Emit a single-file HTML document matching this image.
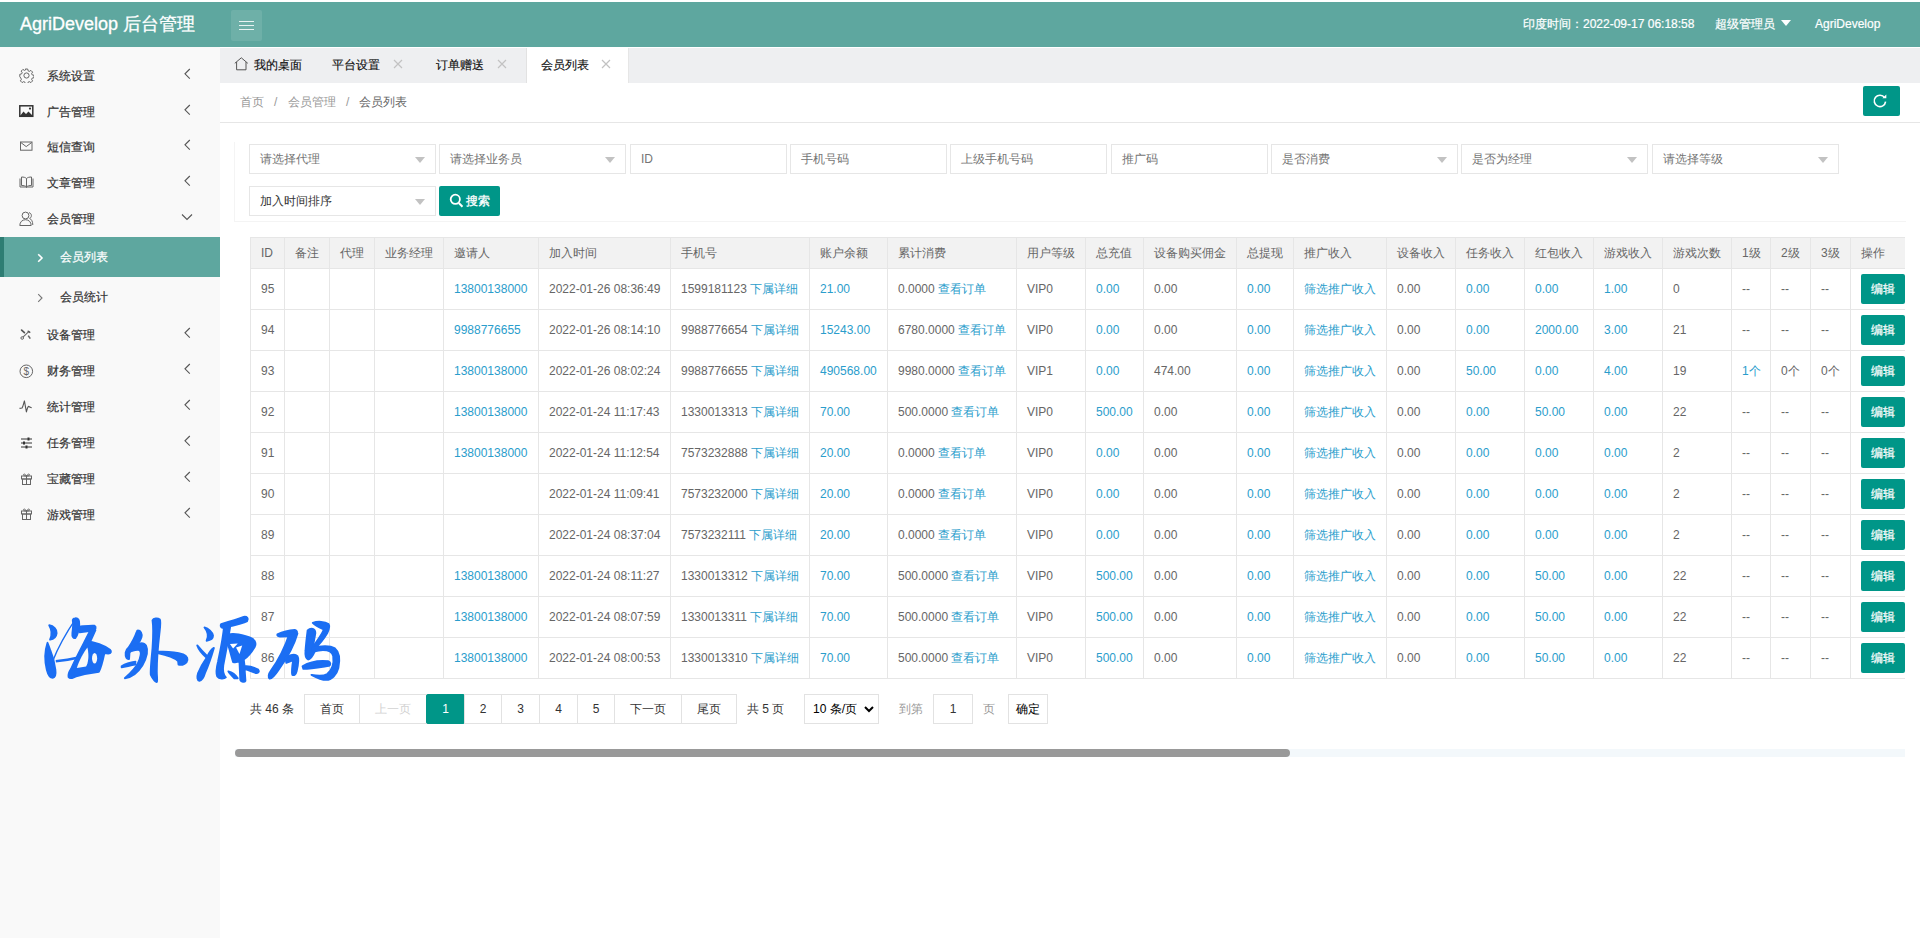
<!DOCTYPE html>
<html><head><meta charset="utf-8">
<style>
*{margin:0;padding:0;box-sizing:border-box}
html,body{width:1920px;height:938px;overflow:hidden}
body{position:relative;background:#fff;font-family:"Liberation Sans",sans-serif;font-size:12px;color:#333}
.a{position:absolute}
#hdr{left:0;top:2px;width:1920px;height:45px;background:#5ea79f;color:#fff}
#logo{left:20px;top:10px;font-size:18px;line-height:24px;white-space:nowrap;-webkit-text-stroke:0.3px #fff}
#burger{left:231px;top:8px;width:31px;height:31px;background:rgba(255,255,255,.1);border-radius:2px}
#burger i{position:absolute;left:8px;width:15px;height:1.2px;background:#e8f3f2}
.hr{top:14px;line-height:16px;font-size:12px;white-space:nowrap;-webkit-text-stroke:0.2px #fff}
#side{left:0;top:47px;width:220px;height:891px;background:#f9f9f9}
.mi{position:absolute;left:0;width:220px;height:36px;line-height:36px;color:#333}
.mi .t{position:absolute;left:47px;top:0;-webkit-text-stroke:0.2px currentColor}
.mi svg.ic{position:absolute;left:19px;top:11px}
.mi svg.ch{position:absolute;left:183px;top:12px}
.sub{height:40px;line-height:40px}
.sub .t{left:60px}
.sub svg.ch{left:36px;top:14px}
.act{background:#5ea79f;color:#fff}
.act:before{content:"";position:absolute;left:0;top:0;width:4px;height:40px;background:#2e7d73}
#tabs{left:220px;top:48px;width:1700px;height:35px;background:#eeeff1}
.tab{position:absolute;top:0;height:35px;line-height:34px;white-space:nowrap;color:#111;-webkit-text-stroke:0.15px currentColor}
.tab svg{position:absolute}
#crumb{left:220px;top:83px;width:1700px;height:40px;background:#fff;border-bottom:1px solid #e6e6e6}
.cr{position:absolute;top:10.5px;line-height:16px;color:#999}
#refresh{left:1863px;top:86px;width:37px;height:30px;background:#009688;border-radius:2px}
.inp{position:absolute;height:30px;border:1px solid #e6e6e6;background:#fff;line-height:28px;padding-left:10px;color:#757575;white-space:nowrap}
.sel:after{content:"";position:absolute;right:10px;top:12px;border-left:5px solid transparent;border-right:5px solid transparent;border-top:6px solid #c2c2c2}
#sbtn{left:439px;top:186px;width:61px;height:30px;background:#009688;border-radius:2px;color:#fff;line-height:30px;-webkit-text-stroke:0.3px #fff}
#tblwrap{left:235px;top:221px;width:1670px;height:545px;overflow:hidden}
table{position:absolute;left:15px;top:16px;border-collapse:collapse;table-layout:fixed}
td,th{border:1px solid #e6e6e6;padding:0 0 0 10px;font-weight:normal;text-align:left;white-space:nowrap;overflow:hidden;color:#666;font-size:12px}
th{height:31px;background:#f2f2f2}
td{height:41px}
.l{color:#2a9dcc}
.eb{display:inline-block;width:44px;height:30px;line-height:30px;background:#009688;color:#fff;text-align:center;border-radius:2px;-webkit-text-stroke:0.2px #fff}
#sbar{left:235px;top:749px;width:1670px;height:8px;background:#f3f8fb}
#thumb{left:235px;top:749px;width:1055px;height:8px;background:#999;border-radius:4px}
.pg{position:absolute;top:694px;height:30px;line-height:28px;border:1px solid #e2e2e2;text-align:center;color:#333;background:#fff}
.pt{position:absolute;top:701px;line-height:16px;color:#333;white-space:nowrap}
</style></head><body>
<div id="hdr" class="a">
  <div id="logo" class="a">AgriDevelop 后台管理</div>
  <div id="burger" class="a"><i style="top:11px"></i><i style="top:15px"></i><i style="top:19px"></i></div>
  <div class="a hr" style="left:1523px">印度时间：2022-09-17 06:18:58</div>
  <div class="a hr" style="left:1715px">超级管理员</div>
  <div class="a" style="left:1781px;top:18px;border-left:5px solid transparent;border-right:5px solid transparent;border-top:6px solid #fff"></div>
  <div class="a hr" style="left:1815px">AgriDevelop</div>
</div>

<div id="side" class="a">
<div class="mi" style="top:11px"><svg class="ic" width="15" height="15" viewBox="0 0 15 15" style="left:19px;top:10px"><path d="M6.3 1h2.4l.4 1.8 1.2.6 1.6-1 1.7 1.7-1 1.6.6 1.2 1.8.4v2.4l-1.8.4-.6 1.2 1 1.6-1.7 1.7-1.6-1-1.2.6-.4 1.8H6.3l-.4-1.8-1.2-.6-1.6 1-1.7-1.7 1-1.6-.6-1.2L.8 8.7V6.3l1.8-.4.6-1.2-1-1.6 1.7-1.7 1.6 1 1.2-.6z" fill="none" stroke="#666" stroke-width="1"/><circle cx="7.5" cy="7.5" r="2.6" fill="none" stroke="#666" stroke-width="1"/></svg><span class="t">系统设置</span><svg class="ch" width="9" height="12" viewBox="0 0 9 12" style="left:183px;top:10px"><path d="M6.8 1 L2 5.8 L6.8 10.6" fill="none" stroke="#555" stroke-width="1.1"/></svg></div>
<div class="mi" style="top:47px"><svg class="ic" width="15" height="13" viewBox="0 0 15 13" style="left:19px;top:11px"><rect x="0.8" y="0.8" width="13" height="10.5" fill="none" stroke="#333" stroke-width="1.5"/><path d="M1 11 L4.5 6.5 L7 9 L9.5 6.5 L14 11 Z" fill="#333"/><circle cx="11" cy="3.6" r="1.1" fill="#333"/></svg><span class="t">广告管理</span><svg class="ch" width="9" height="12" viewBox="0 0 9 12" style="left:183px;top:10px"><path d="M6.8 1 L2 5.8 L6.8 10.6" fill="none" stroke="#555" stroke-width="1.1"/></svg></div>
<div class="mi" style="top:82px"><svg class="ic" width="14" height="11" viewBox="0 0 14 11" style="left:19px;top:12px"><rect x="1.5" y="1" width="11.5" height="8.2" fill="none" stroke="#666" stroke-width="1"/><path d="M1.8 1.5 L7.2 5.6 L12.7 1.5" fill="none" stroke="#666" stroke-width="1"/></svg><span class="t">短信查询</span><svg class="ch" width="9" height="12" viewBox="0 0 9 12" style="left:183px;top:10px"><path d="M6.8 1 L2 5.8 L6.8 10.6" fill="none" stroke="#555" stroke-width="1.1"/></svg></div>
<div class="mi" style="top:118px"><svg class="ic" width="15" height="12" viewBox="0 0 15 12" style="left:19px;top:11px"><path d="M1 2.5v8.5h5.5c.6 0 1 .4 1 .8 0-.4.4-.8 1-.8H14V2.5" fill="none" stroke="#666" stroke-width="1"/><path d="M2.5 1v8.5c2 0 4 .3 5 1.5 1-1.2 3-1.5 5-1.5V1c-2 0-4 .4-5 1.5C6.5 1.4 4.5 1 2.5 1zM7.5 2.5V11" fill="none" stroke="#666" stroke-width="1"/></svg><span class="t">文章管理</span><svg class="ch" width="9" height="12" viewBox="0 0 9 12" style="left:183px;top:10px"><path d="M6.8 1 L2 5.8 L6.8 10.6" fill="none" stroke="#555" stroke-width="1.1"/></svg></div>
<div class="mi" style="top:154px"><svg class="ic" width="15" height="16" viewBox="0 0 15 16" style="left:19px;top:10px"><circle cx="6.5" cy="4.5" r="3.4" fill="none" stroke="#666" stroke-width="1"/><path d="M0.8 14.5c0-3.5 2.5-5.8 5.7-5.8s5.7 2.3 5.7 5.8z" fill="none" stroke="#666" stroke-width="1"/><path d="M10 1.6c1.6.5 2.4 1.7 2.4 3s-.7 2.2-1.8 2.8c1.7.8 3.2 2.8 3.2 6.6" fill="none" stroke="#666" stroke-width="1"/></svg><span class="t">会员管理</span><svg class="ch" width="12" height="8" viewBox="0 0 12 8" style="left:181px;top:12px"><path d="M1 1.5 L6 6.5 L11 1.5" fill="none" stroke="#555" stroke-width="1.1"/></svg></div>
<div class="mi" style="top:270px"><svg class="ic" width="24" height="24" viewBox="0 0 24 24" style="left:14px;top:5px"><path d="M7.6 8.1 L10.4 10.7" stroke="#555" stroke-width="1.7" stroke-linecap="round"/><path d="M9 15.2 L14.2 10.2" stroke="#666" stroke-width="1.1"/><circle cx="8.2" cy="16" r="1.3" fill="none" stroke="#666" stroke-width="1"/><path d="M13.2 9 Q14.5 7.8 16.8 10.2 L15 11.2 Z" fill="#555"/><path d="M14.2 13.6 L16.3 16.6" stroke="#666" stroke-width="1.6"/></svg><span class="t">设备管理</span><svg class="ch" width="9" height="12" viewBox="0 0 9 12" style="left:183px;top:10px"><path d="M6.8 1 L2 5.8 L6.8 10.6" fill="none" stroke="#555" stroke-width="1.1"/></svg></div>
<div class="mi" style="top:306px"><svg class="ic" width="15" height="15" viewBox="0 0 15 15" style="left:19px;top:11px"><circle cx="7.3" cy="7.3" r="6.3" fill="none" stroke="#666" stroke-width="1"/><text x="7.3" y="11" text-anchor="middle" font-size="10" fill="#666" font-family="Liberation Sans">$</text></svg><span class="t">财务管理</span><svg class="ch" width="9" height="12" viewBox="0 0 9 12" style="left:183px;top:10px"><path d="M6.8 1 L2 5.8 L6.8 10.6" fill="none" stroke="#555" stroke-width="1.1"/></svg></div>
<div class="mi" style="top:342px"><svg class="ic" width="24" height="24" viewBox="0 0 24 24" style="left:14px;top:5px"><path d="M5.5 14.4 L8 14 C9 13 9.6 9 10.4 6.9 L12.4 17.9 C13 15.5 13.6 12.8 14.4 12.4 C15.3 12.6 16.5 13.6 17.7 13.8" fill="none" stroke="#555" stroke-width="1.1" stroke-linejoin="round"/></svg><span class="t">统计管理</span><svg class="ch" width="9" height="12" viewBox="0 0 9 12" style="left:183px;top:10px"><path d="M6.8 1 L2 5.8 L6.8 10.6" fill="none" stroke="#555" stroke-width="1.1"/></svg></div>
<div class="mi" style="top:378px"><svg class="ic" width="13" height="12" viewBox="0 0 13 12" style="left:20px;top:12px"><path d="M1 2h11M1 6h11M1 10h11" stroke="#333" stroke-width="1"/><rect x="7.5" y="0.5" width="2" height="3" fill="#333"/><rect x="3" y="4.5" width="2" height="3" fill="#333"/><rect x="5.5" y="8.5" width="2" height="3" fill="#333"/></svg><span class="t">任务管理</span><svg class="ch" width="9" height="12" viewBox="0 0 9 12" style="left:183px;top:10px"><path d="M6.8 1 L2 5.8 L6.8 10.6" fill="none" stroke="#555" stroke-width="1.1"/></svg></div>
<div class="mi" style="top:414px"><svg class="ic" width="13" height="12" viewBox="0 0 13 12" style="left:20px;top:12px"><rect x="1.5" y="3" width="10" height="3" fill="none" stroke="#666"/><rect x="2.5" y="6" width="8" height="5.5" fill="none" stroke="#666"/><path d="M6.5 3v8.5M6.5 3C5 .5 3.5.8 3.5 1.8S5 3 6.5 3C8 .5 9.5.8 9.5 1.8S8 3 6.5 3" fill="none" stroke="#666"/></svg><span class="t">宝藏管理</span><svg class="ch" width="9" height="12" viewBox="0 0 9 12" style="left:183px;top:10px"><path d="M6.8 1 L2 5.8 L6.8 10.6" fill="none" stroke="#555" stroke-width="1.1"/></svg></div>
<div class="mi" style="top:450px"><svg class="ic" width="13" height="12" viewBox="0 0 13 12" style="left:20px;top:11px"><rect x="1.5" y="3" width="10" height="3" fill="none" stroke="#666"/><rect x="2.5" y="6" width="8" height="5.5" fill="none" stroke="#666"/><path d="M6.5 3v8.5M6.5 3C5 .5 3.5.8 3.5 1.8S5 3 6.5 3C8 .5 9.5.8 9.5 1.8S8 3 6.5 3" fill="none" stroke="#666"/></svg><span class="t">游戏管理</span><svg class="ch" width="9" height="12" viewBox="0 0 9 12" style="left:183px;top:10px"><path d="M6.8 1 L2 5.8 L6.8 10.6" fill="none" stroke="#555" stroke-width="1.1"/></svg></div>
<div class="mi sub act" style="top:190px"><svg class="ch" width="8" height="11" viewBox="0 0 8 11" style="left:36px;top:16px"><path d="M2.2 1.2 L6 5 L2.2 8.8" fill="none" stroke="#fff" stroke-width="1.6"/></svg><span class="t">会员列表</span></div>
<div class="mi sub" style="top:230px"><svg class="ch" width="8" height="11" viewBox="0 0 8 11" style="left:36px;top:16px"><path d="M2.2 1.2 L6 5 L2.2 8.8" fill="none" stroke="#777" stroke-width="1.1"/></svg><span class="t">会员统计</span></div>
</div>

<div id="tabs" class="a">
  <div class="tab" style="left:0;width:96px"><svg width="15" height="14" viewBox="0 0 15 14" style="left:14px;top:9px"><path d="M0.8 6.3 L7.3 0.8 L13.8 6.3 M2.6 5 V12.8 H12 V5" fill="none" stroke="#555" stroke-width="1"/></svg><span style="position:absolute;left:34px">我的桌面</span></div>
  <div class="tab" style="left:96px;width:104px"><span style="position:absolute;left:16px">平台设置</span><svg width="10" height="10" viewBox="0 0 10 10" style="left:77px;top:11px"><path d="M1 1L9 9M9 1L1 9" stroke="#c2c2c2" stroke-width="1.2"/></svg></div>
  <div class="tab" style="left:200px;width:104px"><span style="position:absolute;left:16px">订单赠送</span><svg width="10" height="10" viewBox="0 0 10 10" style="left:77px;top:11px"><path d="M1 1L9 9M9 1L1 9" stroke="#c2c2c2" stroke-width="1.2"/></svg></div>
  <div class="tab" style="left:306px;width:103px;background:#fff;border-left:1px solid #e2e2e2;border-right:1px solid #e6e6e6"><span style="position:absolute;left:14px">会员列表</span><svg width="10" height="10" viewBox="0 0 10 10" style="left:74px;top:11px"><path d="M1 1L9 9M9 1L1 9" stroke="#c2c2c2" stroke-width="1.2"/></svg></div>
</div>
<div id="crumb" class="a">
  <span class="cr" style="left:20px">首页</span>
  <span class="cr" style="left:54px">/</span>
  <span class="cr" style="left:68px">会员管理</span>
  <span class="cr" style="left:126px">/</span>
  <span class="cr" style="left:139px;color:#666">会员列表</span>
</div>
<div id="refresh" class="a"><svg width="37" height="30" viewBox="0 0 37 30" style="position:absolute;left:0;top:0"><path d="M21.6 11.6 A5.7 5.7 0 1 0 22.6 15.6" fill="none" stroke="#fff" stroke-width="1.6"/><path d="M19.4 12.3 L23.3 12.3 L23.3 8.4 Z" fill="#fff"/></svg></div>

<div id="cardln" class="a" style="left:234px;top:142px;width:1672px;height:80px;border-left:1px solid #f4f4f4;border-bottom:1px solid #f4f4f4"></div>
<div id="form">
  <div class="inp sel" style="left:249px;top:144px;width:187px">请选择代理</div>
  <div class="inp sel" style="left:439px;top:144px;width:187px">请选择业务员</div>
  <div class="inp" style="left:630px;top:144px;width:157px">ID</div>
  <div class="inp" style="left:790px;top:144px;width:157px">手机号码</div>
  <div class="inp" style="left:950px;top:144px;width:157px">上级手机号码</div>
  <div class="inp" style="left:1111px;top:144px;width:157px">推广码</div>
  <div class="inp sel" style="left:1271px;top:144px;width:187px">是否消费</div>
  <div class="inp sel" style="left:1461px;top:144px;width:187px">是否为经理</div>
  <div class="inp sel" style="left:1652px;top:144px;width:187px">请选择等级</div>
  <div class="inp sel" style="left:249px;top:186px;width:187px;color:#333">加入时间排序</div>
  <div id="sbtn" class="a"><svg width="15" height="16" viewBox="0 0 15 16" style="position:absolute;left:10px;top:7px"><circle cx="6.3" cy="6.3" r="4.6" fill="none" stroke="#fff" stroke-width="1.8"/><path d="M9.8 10 L13.5 13.8" stroke="#fff" stroke-width="2"/></svg><span style="position:absolute;left:27px">搜索</span></div>
</div>

<div id="tblwrap" class="a"><table style="width:1680px"><colgroup><col style="width:34px"><col style="width:45px"><col style="width:45px"><col style="width:69px"><col style="width:95px"><col style="width:132px"><col style="width:139px"><col style="width:78px"><col style="width:129px"><col style="width:69px"><col style="width:58px"><col style="width:93px"><col style="width:57px"><col style="width:93px"><col style="width:69px"><col style="width:69px"><col style="width:69px"><col style="width:69px"><col style="width:69px"><col style="width:39px"><col style="width:40px"><col style="width:40px"><col style="width:80px"></colgroup><tr><th>ID</th><th>备注</th><th>代理</th><th>业务经理</th><th>邀请人</th><th>加入时间</th><th>手机号</th><th>账户余额</th><th>累计消费</th><th>用户等级</th><th>总充值</th><th>设备购买佣金</th><th>总提现</th><th>推广收入</th><th>设备收入</th><th>任务收入</th><th>红包收入</th><th>游戏收入</th><th>游戏次数</th><th>1级</th><th>2级</th><th>3级</th><th>操作</th></tr><tr><td>95</td><td></td><td></td><td></td><td><span class="l">13800138000</span></td><td>2022-01-26 08:36:49</td><td>1599181123 <span class="l">下属详细</span></td><td><span class="l">21.00</span></td><td>0.0000 <span class="l">查看订单</span></td><td>VIP0</td><td><span class="l">0.00</span></td><td>0.00</td><td><span class="l">0.00</span></td><td><span class="l">筛选推广收入</span></td><td>0.00</td><td><span class="l">0.00</span></td><td><span class="l">0.00</span></td><td><span class="l">1.00</span></td><td>0</td><td>--</td><td>--</td><td>--</td><td><span class="eb">编辑</span></td></tr><tr><td>94</td><td></td><td></td><td></td><td><span class="l">9988776655</span></td><td>2022-01-26 08:14:10</td><td>9988776654 <span class="l">下属详细</span></td><td><span class="l">15243.00</span></td><td>6780.0000 <span class="l">查看订单</span></td><td>VIP0</td><td><span class="l">0.00</span></td><td>0.00</td><td><span class="l">0.00</span></td><td><span class="l">筛选推广收入</span></td><td>0.00</td><td><span class="l">0.00</span></td><td><span class="l">2000.00</span></td><td><span class="l">3.00</span></td><td>21</td><td>--</td><td>--</td><td>--</td><td><span class="eb">编辑</span></td></tr><tr><td>93</td><td></td><td></td><td></td><td><span class="l">13800138000</span></td><td>2022-01-26 08:02:24</td><td>9988776655 <span class="l">下属详细</span></td><td><span class="l">490568.00</span></td><td>9980.0000 <span class="l">查看订单</span></td><td>VIP1</td><td><span class="l">0.00</span></td><td>474.00</td><td><span class="l">0.00</span></td><td><span class="l">筛选推广收入</span></td><td>0.00</td><td><span class="l">50.00</span></td><td><span class="l">0.00</span></td><td><span class="l">4.00</span></td><td>19</td><td><span class="l">1个</span></td><td>0个</td><td>0个</td><td><span class="eb">编辑</span></td></tr><tr><td>92</td><td></td><td></td><td></td><td><span class="l">13800138000</span></td><td>2022-01-24 11:17:43</td><td>1330013313 <span class="l">下属详细</span></td><td><span class="l">70.00</span></td><td>500.0000 <span class="l">查看订单</span></td><td>VIP0</td><td><span class="l">500.00</span></td><td>0.00</td><td><span class="l">0.00</span></td><td><span class="l">筛选推广收入</span></td><td>0.00</td><td><span class="l">0.00</span></td><td><span class="l">50.00</span></td><td><span class="l">0.00</span></td><td>22</td><td>--</td><td>--</td><td>--</td><td><span class="eb">编辑</span></td></tr><tr><td>91</td><td></td><td></td><td></td><td><span class="l">13800138000</span></td><td>2022-01-24 11:12:54</td><td>7573232888 <span class="l">下属详细</span></td><td><span class="l">20.00</span></td><td>0.0000 <span class="l">查看订单</span></td><td>VIP0</td><td><span class="l">0.00</span></td><td>0.00</td><td><span class="l">0.00</span></td><td><span class="l">筛选推广收入</span></td><td>0.00</td><td><span class="l">0.00</span></td><td><span class="l">0.00</span></td><td><span class="l">0.00</span></td><td>2</td><td>--</td><td>--</td><td>--</td><td><span class="eb">编辑</span></td></tr><tr><td>90</td><td></td><td></td><td></td><td></td><td>2022-01-24 11:09:41</td><td>7573232000 <span class="l">下属详细</span></td><td><span class="l">20.00</span></td><td>0.0000 <span class="l">查看订单</span></td><td>VIP0</td><td><span class="l">0.00</span></td><td>0.00</td><td><span class="l">0.00</span></td><td><span class="l">筛选推广收入</span></td><td>0.00</td><td><span class="l">0.00</span></td><td><span class="l">0.00</span></td><td><span class="l">0.00</span></td><td>2</td><td>--</td><td>--</td><td>--</td><td><span class="eb">编辑</span></td></tr><tr><td>89</td><td></td><td></td><td></td><td></td><td>2022-01-24 08:37:04</td><td>7573232111 <span class="l">下属详细</span></td><td><span class="l">20.00</span></td><td>0.0000 <span class="l">查看订单</span></td><td>VIP0</td><td><span class="l">0.00</span></td><td>0.00</td><td><span class="l">0.00</span></td><td><span class="l">筛选推广收入</span></td><td>0.00</td><td><span class="l">0.00</span></td><td><span class="l">0.00</span></td><td><span class="l">0.00</span></td><td>2</td><td>--</td><td>--</td><td>--</td><td><span class="eb">编辑</span></td></tr><tr><td>88</td><td></td><td></td><td></td><td><span class="l">13800138000</span></td><td>2022-01-24 08:11:27</td><td>1330013312 <span class="l">下属详细</span></td><td><span class="l">70.00</span></td><td>500.0000 <span class="l">查看订单</span></td><td>VIP0</td><td><span class="l">500.00</span></td><td>0.00</td><td><span class="l">0.00</span></td><td><span class="l">筛选推广收入</span></td><td>0.00</td><td><span class="l">0.00</span></td><td><span class="l">50.00</span></td><td><span class="l">0.00</span></td><td>22</td><td>--</td><td>--</td><td>--</td><td><span class="eb">编辑</span></td></tr><tr><td>87</td><td></td><td></td><td></td><td><span class="l">13800138000</span></td><td>2022-01-24 08:07:59</td><td>1330013311 <span class="l">下属详细</span></td><td><span class="l">70.00</span></td><td>500.0000 <span class="l">查看订单</span></td><td>VIP0</td><td><span class="l">500.00</span></td><td>0.00</td><td><span class="l">0.00</span></td><td><span class="l">筛选推广收入</span></td><td>0.00</td><td><span class="l">0.00</span></td><td><span class="l">50.00</span></td><td><span class="l">0.00</span></td><td>22</td><td>--</td><td>--</td><td>--</td><td><span class="eb">编辑</span></td></tr><tr><td>86</td><td></td><td></td><td></td><td><span class="l">13800138000</span></td><td>2022-01-24 08:00:53</td><td>1330013310 <span class="l">下属详细</span></td><td><span class="l">70.00</span></td><td>500.0000 <span class="l">查看订单</span></td><td>VIP0</td><td><span class="l">500.00</span></td><td>0.00</td><td><span class="l">0.00</span></td><td><span class="l">筛选推广收入</span></td><td>0.00</td><td><span class="l">0.00</span></td><td><span class="l">50.00</span></td><td><span class="l">0.00</span></td><td>22</td><td>--</td><td>--</td><td>--</td><td><span class="eb">编辑</span></td></tr></table></div>
<div id="sbar" class="a"></div>
<div id="thumb" class="a"></div>
<div id="pager">
  <span class="pt" style="left:250px">共 46 条</span>
  <div class="pg" style="left:304px;width:56px">首页</div>
  <div class="pg" style="left:359px;width:68px;color:#d2d2d2">上一页</div>
  <div class="pg" style="left:426px;width:39px;background:#009688;border-color:#009688;color:#fff;border-radius:2px">1</div>
  <div class="pg" style="left:464px;width:38px">2</div>
  <div class="pg" style="left:501px;width:39px">3</div>
  <div class="pg" style="left:539px;width:39px">4</div>
  <div class="pg" style="left:577px;width:38px">5</div>
  <div class="pg" style="left:614px;width:68px">下一页</div>
  <div class="pg" style="left:681px;width:56px">尾页</div>
  <span class="pt" style="left:747px">共 5 页</span>
  <div class="pg" style="left:804px;width:75px;text-align:left;padding-left:8px;color:#000">10 条/页<svg width="10" height="7" viewBox="0 0 10 7" style="position:absolute;left:59px;top:11px"><path d="M1 1L5 5L9 1" fill="none" stroke="#000" stroke-width="2"/></svg></div>
  <span class="pt" style="left:899px;color:#999">到第</span>
  <div class="pg" style="left:933px;width:40px;color:#333">1</div>
  <span class="pt" style="left:983px;color:#999">页</span>
  <div class="pg" style="left:1008px;width:40px;color:#000">确定</div>
</div>
<!--wm--><svg class="a" style="left:40px;top:610px;overflow:visible" width="80" height="80" viewBox="0 0 938 938"><g fill="#1b6ef3" stroke="#1b6ef3" stroke-width="22" stroke-linejoin="round"><path d="M108,178 C160,185 200,230 195,270 C190,315 160,340 118,348 C140,300 145,240 108,178 Z"/>
<path d="M88,385 C60,470 55,600 80,700 C95,760 115,795 150,795 C180,790 188,760 180,700 C170,620 150,540 120,470 C105,430 95,400 88,385 Z"/>
<path d="M148,600 C220,420 320,250 418,105" fill="none" stroke="#1b6ef3" stroke-width="16"/>
<path d="M185,600 C300,590 380,575 440,560" fill="none" stroke="#1b6ef3" stroke-width="30"/>
<path d="M410,98 C445,90 465,120 460,170 C455,230 440,300 415,328 C390,335 375,310 380,270 C385,220 395,170 385,130 C380,110 395,100 410,98 Z"/>
<path d="M455,195 C520,190 590,180 640,185 C660,195 655,225 630,240 C580,245 510,255 465,262 Z"/>
<path d="M600,220 L650,235 C590,370 480,600 420,770 C400,800 350,810 335,785 C330,760 345,720 365,690 C420,560 520,380 600,220 Z"/>
<path d="M540,365 C640,370 760,420 820,465 C840,485 835,510 800,512 L755,505 C735,600 715,680 690,725 C600,735 480,760 380,790 L395,700 C450,690 520,670 560,640 Z"/>
<path d="M432,680 C460,590 510,500 556,440 C578,540 566,620 540,662 Z" fill="#f9f9f9" stroke="none"/>
<ellipse cx="640" cy="565" rx="30" ry="62" fill="#f9f9f9" stroke="none"/></g></svg><svg class="a" style="left:115px;top:610px;overflow:visible" width="80" height="80" viewBox="0 0 938 938"><g fill="#1b6ef3" stroke="#1b6ef3" stroke-width="22" stroke-linejoin="round"><path d="M268,240 C300,240 320,275 310,320 C290,390 230,450 170,500 L165,575 C140,580 120,555 125,500 C128,470 140,455 160,440 C200,380 240,300 255,255 C258,245 262,240 268,240 Z"/>
<path d="M215,420 C280,385 340,380 365,420 C390,470 370,560 320,650 C270,730 190,790 115,800 C160,760 230,700 270,620 C300,560 310,500 290,470 C260,460 230,470 200,480 Z"/>
<path d="M78,660 C120,630 190,610 240,605 L235,640 C180,650 120,665 78,672 Z"/>
<path d="M440,120 C450,95 500,90 525,110 C540,130 530,200 520,280 C500,450 490,600 490,720 C490,780 500,830 490,845 C470,840 440,800 420,760 C415,720 425,600 440,450 C450,300 450,180 440,120 Z"/>
<path d="M500,490 C600,485 720,495 800,520 C850,540 860,580 840,610 C815,640 770,645 745,640 L740,600 C700,560 600,525 500,505 Z"/></g></svg><svg class="a" style="left:190px;top:610px;overflow:visible" width="80" height="80" viewBox="0 0 938 938"><g fill="#1b6ef3" stroke="#1b6ef3" stroke-width="22" stroke-linejoin="round"><path d="M170,205 C215,215 265,260 270,300 C270,335 240,355 195,360 C215,320 215,260 170,205 Z"/>
<path d="M85,415 C130,470 180,520 205,545 C225,500 250,460 280,445 C255,530 220,640 175,740 C160,790 140,825 110,830 C85,825 80,790 95,740 C120,680 160,610 195,560 C150,520 100,460 85,415 Z"/>
<path d="M365,165 C450,140 550,110 630,80 C670,75 690,100 670,130 C620,160 520,180 380,210 C360,205 355,180 365,165 Z"/>
<path d="M400,185 L470,200 C450,330 420,500 390,650 C380,720 390,760 420,790 C400,810 340,810 320,780 C300,740 310,680 330,600 C360,460 390,320 400,185 Z"/>
<path d="M450,290 C520,260 620,300 700,320 C760,340 780,390 760,430 C730,480 690,540 630,580 L640,660 C700,650 760,680 800,700 C820,730 790,750 760,735 C720,720 680,700 640,690 L650,830 C640,850 600,845 590,820 L580,600 C560,610 530,615 505,610 C490,560 470,480 450,420 C445,370 445,330 450,290 Z"/>
<path d="M468,400 L560,392 L505,452 Z" fill="#fff" stroke="none"/>
<path d="M540,440 L612,415 L580,515 Z" fill="#fff" stroke="none"/>
<path d="M450,720 C490,730 540,770 560,800 L520,800 C490,770 460,740 450,720 Z"/></g></svg><svg class="a" style="left:265px;top:610px;overflow:visible" width="80" height="80" viewBox="0 0 938 938"><g fill="#1b6ef3" stroke="#1b6ef3" stroke-width="22" stroke-linejoin="round"><path d="M145,285 C200,260 280,240 350,235 C380,240 385,270 360,300 C300,310 220,310 170,310 C150,305 140,295 145,285 Z"/>
<path d="M290,270 L380,275 C340,420 260,560 160,700 C120,760 80,810 55,805 C35,790 40,750 70,710 C150,600 230,450 290,270 Z"/>
<path d="M240,560 C290,530 350,510 380,540 C400,570 390,640 370,720 C360,760 340,770 320,760 C310,720 320,650 330,590 C300,600 270,610 250,620 Z"/>
<path d="M560,150 C620,130 700,135 745,165 C760,185 755,220 730,270 C690,340 620,420 570,470 L555,440 C600,380 660,300 690,230 C650,210 600,190 560,150 Z"/>
<path d="M500,240 C540,200 590,220 590,270 C580,340 560,420 560,470 L590,470 C560,540 530,580 505,580 C480,570 470,530 475,480 C480,400 490,320 500,240 Z"/>
<path d="M440,660 C520,610 640,590 740,600 C770,610 775,640 750,655 C650,670 540,690 450,690 Z"/>
<path d="M560,450 C650,420 760,415 820,450 C870,490 880,580 860,680 C840,760 780,820 720,820 C660,820 600,790 545,760 C600,770 680,780 730,750 C790,700 810,620 800,540 C790,490 740,470 680,470 C640,470 600,480 560,490 Z"/></g></svg><!--/wm-->
</body></html>
